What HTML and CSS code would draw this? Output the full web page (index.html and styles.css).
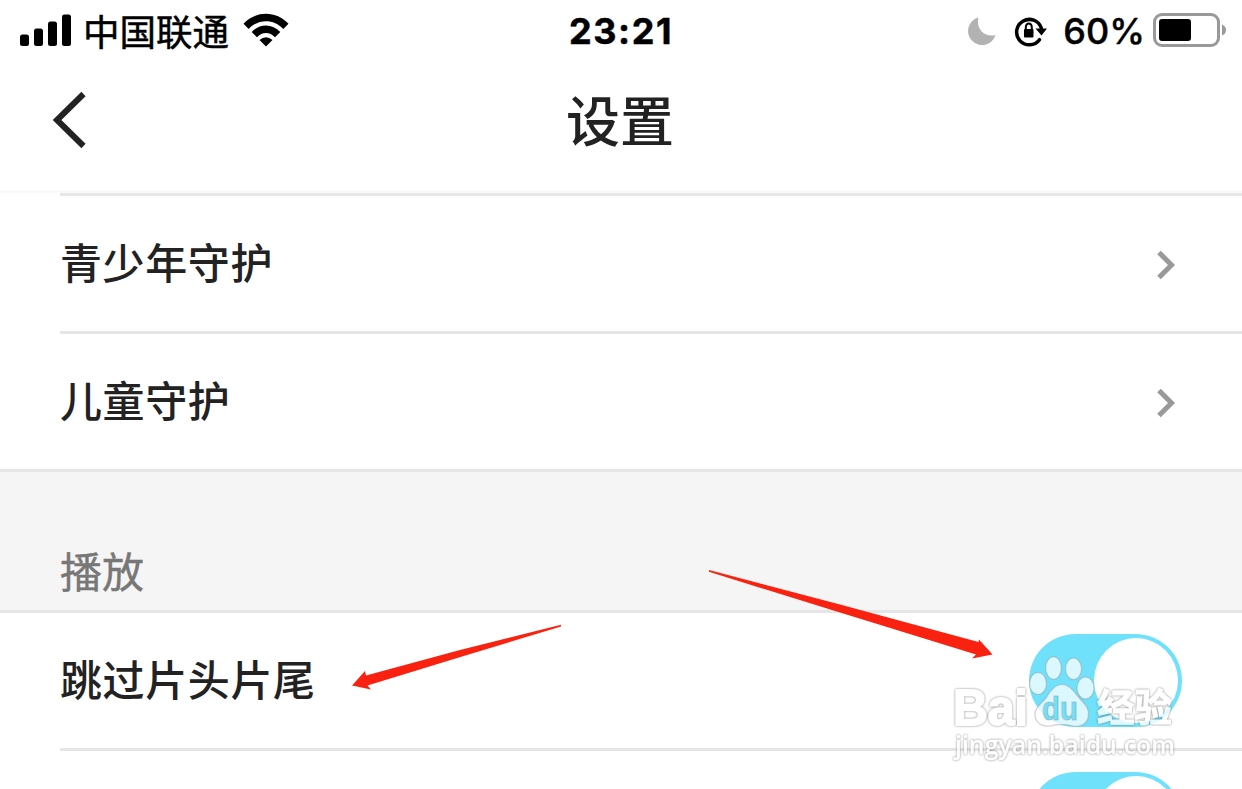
FILE: index.html
```html
<!DOCTYPE html>
<html lang="zh-CN">
<head>
    <meta charset="UTF-8">
    <meta name="viewport" content="width=device-width, initial-scale=1.0">
    <title>设置</title>
    <link rel="stylesheet" href="styles.css">
</head>
<body>
    <div class="status-bar">
        <div class="status-left">
            <svg class="signal" width="52" height="33" viewBox="0 0 52 33">
                <rect x="0" y="20.5" width="9" height="11.5" rx="2.5"/>
                <rect x="14" y="14.5" width="9" height="17.5" rx="2.5"/>
                <rect x="28" y="7.5" width="9" height="24.5" rx="2.5"/>
                <rect x="42" y="0.5" width="9" height="31.5" rx="2.5"/>
            </svg>
            <span class="carrier">中国联通</span>
            <svg class="wifi" width="46" height="34" viewBox="0 0 46 34">
                <path d="M0.5 10.8C12.5 -2.6 33.5 -2.6 45.5 10.8L40.3 16C31 5.5 15 5.5 5.7 16Z"/>
                <path d="M8.7 19C16.5 10.2 29.5 10.2 37.3 19L32 24.2C27 18.5 19 18.5 14 24.2Z"/>
                <path d="M16.5 27Q23 21.5 29.5 27L23 33.5Z"/>
            </svg>
        </div>
        <div class="status-time">23:21</div>
        <div class="status-right">
            <svg class="moon" width="29" height="29" viewBox="0 0 29 29">
                <path d="M10.5 0.5A14 14 0 1 0 27.5 18C17 21 7.5 12 10.5 0.5Z"/>
            </svg>
            <svg class="lock" width="34" height="31" viewBox="0 0 34 31">
                <path class="lock-ring" d="M25.5 23.7A12.7 12.7 0 1 1 27.3 12"/>
                <path d="M21.5 12.5H33L27.5 19.5Z"/>
                <rect x="10" y="13" width="9.5" height="8.5" rx="1"/>
                <path class="lock-shackle" d="M11.8 14V11a3 3.5 0 0 1 6 0V14"/>
            </svg>
            <span class="percent">60%</span>
            <svg class="battery" width="74" height="35" viewBox="0 0 74 35">
                <rect class="battery-case" x="1.5" y="1.5" width="64" height="31" rx="7.5"/>
                <rect x="6" y="6" width="32" height="22" rx="3"/>
                <path class="battery-tip" d="M69 11.5Q73 13 73 17T69 22.5Z"/>
            </svg>
        </div>
    </div>

    <header class="nav">
        <svg class="back" width="36" height="58" viewBox="0 0 36 58">
            <path d="M32.5 3L6 29L32.5 55"/>
        </svg>
        <h1>设置</h1>
    </header>

    <main>
        <div class="line"></div>
        <div class="row">
            <span>青少年守护</span>
            <svg class="chevron" width="20" height="32" viewBox="0 0 20 32">
                <path d="M3 3.5L15.5 16L3 28.5"/>
            </svg>
        </div>
        <div class="line"></div>
        <div class="row">
            <span>儿童守护</span>
            <svg class="chevron" width="20" height="32" viewBox="0 0 20 32">
                <path d="M3 3.5L15.5 16L3 28.5"/>
            </svg>
        </div>

        <h2 class="section-title">播放</h2>

        <div class="row">
            <span>跳过片头片尾</span>
            <div class="toggle"><div class="knob"></div></div>
        </div>
        <div class="line"></div>
        <div class="row row-cut">
            <div class="toggle"><div class="knob"></div></div>
        </div>
    </main>

    <!-- arrows and watermark lie over the list -->
    <svg class="overlay" width="1242" height="789" viewBox="0 0 1242 789">
        <g class="arrows">
            <path d="M561 624.8L460 650L366 675.5L365 671L352 685.5L371 689.5L367.5 685.5L462 656.5L561 626.5Z"/>
            <path d="M709 570L840 604.5L978.5 642L979 639.5L992.5 654.5L972 658.5L976 654.5L840 612.5L709 571.8Z"/>
        </g>
        <g class="watermark">
            <text class="wm-text wm-logo" x="953" y="725" textLength="75" lengthAdjust="spacingAndGlyphs">Bai</text>
            <ellipse cx="1038" cy="683.5" rx="8.5" ry="11"/>
            <ellipse cx="1053.5" cy="668" rx="7.8" ry="11.3"/>
            <ellipse cx="1073.5" cy="668.8" rx="8" ry="10.8"/>
            <ellipse cx="1085.5" cy="688" rx="8.5" ry="11"/>
            <path d="M1062 684.5C1070 684.5 1074 692 1081 700C1087 706 1090 711 1088 718C1086 725 1079 727 1073 726C1065 724 1058 724 1050 726C1042 727 1036 723 1035 716C1034 708 1041 704 1046 698C1051 690 1055 684.5 1062 684.5Z"/>
            <text class="wm-du" x="1042" y="720" textLength="36" lengthAdjust="spacingAndGlyphs">du</text>
            <text class="wm-text wm-cn" x="1097" y="721" textLength="75" lengthAdjust="spacingAndGlyphs">经验</text>
            <text class="wm-text wm-url" x="955" y="754" textLength="220" lengthAdjust="spacingAndGlyphs">jingyan.baidu.com</text>
        </g>
    </svg>
</body>
</html>
```

FILE: styles.css
```css
* {
    box-sizing: border-box;
}
body {
    margin: 0;
    height: 789px;
    overflow: hidden;
    position: relative;
    background-color: #fff;
    color: #222;
    font-family: "Noto Sans CJK SC", sans-serif;
}
svg {
    display: block;
    flex-shrink: 0;
}
.status-bar {
    display: grid;
    grid-template-columns: 1fr auto 1fr;
    align-items: center;
    height: 62px;
    padding: 0 15px 0 20px;
    color: #000;
}
.status-left,
.status-right {
    display: flex;
    align-items: center;
}
.status-right {
    justify-content: flex-end;
}
.signal {
    margin-bottom: 1px;
}
.carrier {
    margin-left: 11px;
    margin-bottom: 1px;
    font-size: 36.5px;
    line-height: 56px;
    font-weight: 400;
    -webkit-text-stroke: 0.5px #000;
}
.wifi {
    margin-left: 14px;
    margin-bottom: 3px;
}
.status-time {
    margin-right: 5px;
    font-family: Inter, sans-serif;
    font-size: 36px;
    font-weight: 700;
    letter-spacing: 1.6px;
    -webkit-text-stroke: 0.5px #000;
}
.moon {
    fill: #b2b2b2;
}
.lock {
    margin-left: 17px;
}
.lock-ring {
    fill: none;
    stroke: #000;
    stroke-width: 3.5;
    stroke-linecap: round;
}
.lock-shackle {
    fill: none;
    stroke: #000;
    stroke-width: 2;
}
.percent {
    margin-left: 15px;
    font-family: Inter, sans-serif;
    font-size: 36px;
    font-weight: 500;
    -webkit-text-stroke: 0.4px #000;
}
.battery {
    margin-left: 8px;
    margin-bottom: 2px;
}
.battery-case {
    fill: none;
    stroke: #999;
    stroke-width: 3;
}
.battery-tip {
    fill: #999;
}
.nav {
    display: grid;
    grid-template-columns: 1fr auto 1fr;
    align-items: center;
    height: 131px;
    padding: 0 51px 14px;
    border-bottom: 3px solid #fafafa;
}
.back {
    margin-top: 2px;
    fill: none;
    stroke: #222;
    stroke-width: 6;
}
h1 {
    margin: 0 2px 1px 0;
    font-size: 54px;
    font-weight: 500;
    line-height: 80px;
}
.line {
    height: 3px;
    margin-left: 60px;
    background-color: #e6e6e6;
}
.row {
    display: flex;
    align-items: center;
    justify-content: space-between;
    height: 135px;
    padding: 0 60px;
    font-size: 42px;
    font-weight: 500;
    letter-spacing: 0.6px;
    line-height: 60px;
}
.row span {
    margin-bottom: 5px;
}
.row-cut {
    align-items: flex-start;
    height: 38px;
    padding-top: 21px;
    overflow: hidden;
}
.chevron {
    margin-right: 6px;
    margin-top: 2px;
    fill: none;
    stroke: #999;
    stroke-width: 5;
}
.section-title {
    display: flex;
    align-items: flex-end;
    height: 144px;
    margin: 0;
    padding: 0 60px 10px;
    border-top: 3px solid #e6e6e6;
    border-bottom: 3px solid #e6e6e6;
    background-color: #f5f5f5;
    color: #777;
    font-size: 42px;
    font-weight: 400;
    line-height: 60px;
    -webkit-text-stroke: 0.4px #777;
}
.toggle {
    display: flex;
    flex-shrink: 0;
    justify-content: flex-end;
    width: 153px;
    height: 93px;
    margin-left: auto;
    padding: 4px;
    border-radius: 47px;
    background-color: #6fe1fb;
}
.knob {
    width: 84px;
    height: 85px;
    border-radius: 50%;
    background-color: #fff;
}
.overlay {
    position: absolute;
    top: 0;
    left: 0;
}
.arrows {
    fill: #f9210f;
}
.watermark {
    fill: rgba(255, 255, 255, 0.75);
    stroke: rgba(150, 150, 150, 0.45);
    stroke-width: 1.2;
    font-family: "Liberation Sans", sans-serif;
}
.wm-text {
    fill: #fff;
    stroke: #fff;
    stroke-linejoin: round;
    opacity: 0.8;
    filter: drop-shadow(0 0 1px rgba(70, 70, 70, 0.8));
}
.wm-logo {
    font-size: 50px;
    font-weight: 700;
    stroke-width: 2;
}
.wm-du {
    fill: #6fe1fb;
    font-size: 34px;
    font-weight: 700;
}
.wm-cn {
    font-family: "Noto Sans CJK SC", sans-serif;
    font-size: 38px;
    font-weight: 700;
    stroke-width: 1.2;
}
.wm-url {
    font-family: "Open Sans", sans-serif;
    font-size: 26px;
    font-weight: 600;
    stroke-width: 0.3;
}
```
